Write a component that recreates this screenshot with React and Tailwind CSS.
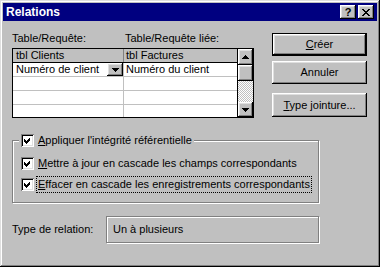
import React from "react";

const raised =
  "bg-[#c0c0c0] shadow-[inset_-1px_-1px_#000,inset_1px_1px_#fff,inset_-2px_-2px_#808080,inset_2px_2px_#dfdfdf]";
const sunkenBox =
  "bg-white shadow-[inset_1px_1px_#808080,inset_-1px_-1px_#fff,inset_2px_2px_#000,inset_-2px_-2px_#dfdfdf]";
const etched = "border border-[#808080] shadow-[inset_1px_1px_#fff,1px_1px_#fff]";

function DownTri() {
  return (
    <svg width="7" height="4" viewBox="0 0 7 4" shapeRendering="crispEdges">
      <polygon points="0,0 7,0 3.5,4" fill="#000" />
    </svg>
  );
}
function UpTri() {
  return (
    <svg width="7" height="4" viewBox="0 0 7 4" shapeRendering="crispEdges">
      <polygon points="0,4 7,4 3.5,0" fill="#000" />
    </svg>
  );
}

function Check() {
  return (
    <div className={"w-[13px] h-[13px] shrink-0 " + sunkenBox}>
      <svg width="13" height="13" viewBox="0 0 13 13" shapeRendering="crispEdges">
        <polygon points="3,5 5,7 9,3 9,6 5,10 3,8" fill="#000" />
      </svg>
    </div>
  );
}

function Btn({ children, def, h }) {
  return (
    <div
      className={
        "w-[95px] flex items-center justify-center " +
        (def ? "border border-black " : "") +
        raised
      }
      style={{ height: h }}
    >
      {children}
    </div>
  );
}

export default function App() {
  return (
    <div
      className={
        "w-[380px] h-[267px] p-[3px] flex flex-col font-['Liberation_Sans',Arial,sans-serif] text-[11px] leading-[13px] text-black bg-[#c0c0c0] shadow-[inset_-1px_-1px_#000,inset_1px_1px_#dfdfdf,inset_-2px_-2px_#808080,inset_2px_2px_#fff]"
      }
    >
      {/* title bar */}
      <div className="h-[18px] bg-[#000080] flex items-center pl-[3px] pr-[3px]">
        <span className="text-white font-bold text-[12px] flex-1">Relations</span>
        <div className={"w-[16px] h-[14px] flex items-center justify-center " + raised}>
          <span className="font-bold text-[11px] leading-none">?</span>
        </div>
        <div className={"ml-[2px] w-[16px] h-[14px] flex items-center justify-center " + raised}>
          <svg width="8" height="7" viewBox="0 0 8 7" shapeRendering="crispEdges">
            <path d="M0 0h2l2 2.5l2-2.5h2l-3 3.5l3 3.5h-2l-2-2.5l-2 2.5h-2l3-3.5z" fill="#000" />
          </svg>
        </div>
      </div>

      {/* top section */}
      <div className="mt-[11px] pl-[9px] flex">
        <div className="w-[242px]">
          <div className="h-[16px] flex">
            <div className="w-[113px]">Table/Requête:</div>
            <div>Table/Requête liée:</div>
          </div>
          <div className="border border-black flex">
            <div className="w-[224px] bg-white">
              <div className="h-[14px] flex bg-[#c0c0c0] border-b border-black">
                <div className="w-[111px] pl-[3px] border-r border-[#808080]">tbl Clients</div>
                <div className="flex-1 pl-[2px]">tbl Factures</div>
              </div>
              <div className="h-[14px] flex border-b border-[#c0c0c0]">
                <div className="w-[111px] pl-[3px] flex items-center border-r border-[#c0c0c0]">
                  <span className="flex-1">Numéro de client</span>
                  <div className={"w-[16px] h-[13px] flex items-center justify-center " + raised}>
                    <DownTri />
                  </div>
                </div>
                <div className="flex-1 pl-[2px]">Numéro du client</div>
              </div>
              <div className="h-[14px] flex border-b border-[#c0c0c0]">
                <div className="w-[111px] border-r border-[#c0c0c0]" />
              </div>
              <div className="h-[14px] flex border-b border-[#c0c0c0]">
                <div className="w-[111px] border-r border-[#c0c0c0]" />
              </div>
              <div className="h-[12px] flex">
                <div className="w-[111px] border-r border-[#c0c0c0]" />
              </div>
            </div>
            <div className="w-[16px] flex flex-col border-l border-black">
              <div className={"h-[16px] flex items-center justify-center " + raised}>
                <UpTri />
              </div>
              <div className={"h-[16px] " + raised} />
              <div className="flex-1 bg-[repeating-conic-gradient(#c0c0c0_0%_25%,#ffffff_0%_50%)] bg-[length:2px_2px]" />
              <div className={"h-[15px] flex items-center justify-center " + raised}>
                <DownTri />
              </div>
            </div>
          </div>
        </div>
        <div className="ml-[18px] flex flex-col">
          <div className="mt-[1px]">
            <Btn def h={23}>
              <span>
                <span className="underline">C</span>réer
              </span>
            </Btn>
          </div>
          <div className="mt-[5px]">
            <Btn h={23}>Annuler</Btn>
          </div>
          <div className="mt-[9px]">
            <Btn h={24}>
              <span>
                <span className="underline">T</span>ype jointure...
              </span>
            </Btn>
          </div>
        </div>
      </div>

      {/* group box */}
      <div className="mt-[22px] ml-[9px] w-[307px]">
        <div className={etched + " pb-[9px]"}>
          <div className="-mt-[7px] ml-[6px] px-[2px] bg-[#c0c0c0] w-fit flex items-center h-[13px] gap-[4px]">
            <Check />
            <span>
              <span className="underline">A</span>ppliquer l'intégrité référentielle
            </span>
          </div>
          <div className="mt-[10px] pl-[8px] flex items-center h-[13px] gap-[4px]">
            <Check />
            <span>
              <span className="underline">M</span>ettre à jour en cascade les champs correspondants
            </span>
          </div>
          <div className="mt-[6px] pl-[8px] flex items-center h-[17px] gap-[2px]">
            <Check />
            <span className="border border-dotted border-black px-[1px] h-[17px] flex items-center">
              <span>
                <span className="underline">E</span>ffacer en cascade les enregistrements correspondants
              </span>
            </span>
          </div>
        </div>
      </div>

      {/* type de relation */}
      <div className="mt-[13px] pl-[9px] flex items-center">
        <div className="w-[94px]">Type de relation:</div>
        <div className={etched + " w-[213px] h-[27px] flex items-center pl-[6px]"}>Un à plusieurs</div>
      </div>
    </div>
  );
}
